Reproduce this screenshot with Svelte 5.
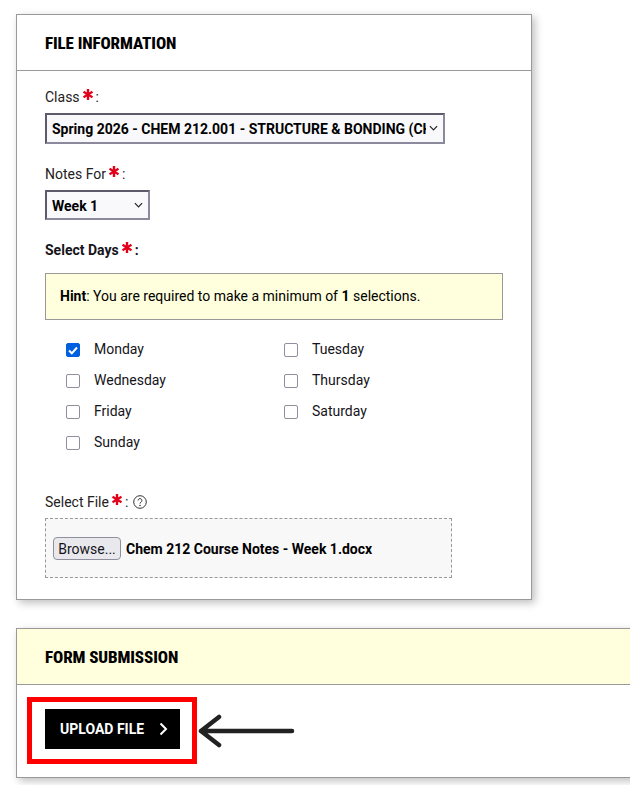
<script>
	const days = [
		{ name: 'Monday', checked: true },
		{ name: 'Tuesday', checked: false },
		{ name: 'Wednesday', checked: false },
		{ name: 'Thursday', checked: false },
		{ name: 'Friday', checked: false },
		{ name: 'Saturday', checked: false },
		{ name: 'Sunday', checked: false }
	];
</script>

{#snippet req()}
	<svg class="req" viewBox="0 0 10 11" width="10" height="11"><path d="M5 0v11M.5 2.700l9 5.600M.5 8.300l9-5.600" /></svg>
{/snippet}

<div class="page">
	<section class="card info">
		<h2 class="card-head">FILE INFORMATION</h2>
		<div class="card-body">
			<div class="label">Class{@render req()}:</div>
			<div class="select class-select">
				<select>
					<option>Spring 2026 - CHEM 212.001 - STRUCTURE &amp; BONDING (CHEM 212)</option>
				</select>
				<svg class="chev" viewBox="0 0 10 6" width="9" height="6"><path d="M1 1l4 4 4-4" /></svg>
			</div>

			<div class="label notes">Notes For{@render req()}:</div>
			<div class="select week-select">
				<select>
					<option>Week 1</option>
				</select>
				<svg class="chev" viewBox="0 0 10 6" width="9" height="6"><path d="M1 1l4 4 4-4" /></svg>
			</div>

			<div class="label days-label"><strong>Select Days</strong>{@render req()}<strong>:</strong></div>
			<div class="hint"><strong>Hint</strong>: You are required to make a minimum of <strong>1</strong> selections.</div>

			<div class="days">
				{#each days as day}
					<label class="day">
						<input type="checkbox" checked={day.checked} />
						<span>{day.name}</span>
					</label>
				{/each}
			</div>

			<div class="label file-label">
				Select File{@render req()}:
				<svg class="help" viewBox="0 0 14 14" width="14" height="14">
					<circle cx="7" cy="7" r="6.300" />
					<path d="M5.100 5.500a1.900 1.900 0 1 1 2.900 1.600c-.7.4-1 .8-1 1.500" />
					<circle class="dot" cx="7" cy="10.500" r=".8" />
				</svg>
			</div>
			<div class="dropzone">
				<button class="browse" type="button">Browse...</button>
				<strong>Chem 212 Course Notes - Week 1.docx</strong>
			</div>
		</div>
	</section>

	<section class="card submit">
		<h2 class="card-head yellow">FORM SUBMISSION</h2>
		<div class="submit-body">
			<button class="upload" type="button">
				UPLOAD FILE
				<svg viewBox="0 0 9 14" width="9" height="14"><path d="M1.500 1.500L7 7l-5.500 5.500" /></svg>
			</button>
			<div class="red-box"></div>
			<svg class="arrow" viewBox="0 0 98 34" width="98" height="34">
				<path d="M95 17H4M22 3L4 17l18 14" />
			</svg>
		</div>
	</section>
</div>

<style>
	:global(body) {
		margin: 0;
		background: #fff;
		overflow: hidden;
	}

	.page {
		width: 630px;
		height: 785px;
		overflow: hidden;
		padding: 14px 0 0 16px;
		box-sizing: border-box;
		font-family: Roboto, sans-serif;
		font-size: 14px;
		color: #15141a;
	}

	.card {
		background: #fff;
		border: 1px solid #999;
		box-sizing: border-box;
		box-shadow: 3px 3px 8px rgba(0, 0, 0, 0.25);
	}

	.info {
		width: 516px;
		height: 586px;
	}

	.card-head {
		margin: 0;
		height: 56px;
		box-sizing: border-box;
		padding-left: 28px;
		border-bottom: 1px solid #999;
		font-size: 17px;
		font-weight: 800;
		font-stretch: 85%;
		letter-spacing: -0.1px;
		line-height: 56px;
		color: #000;
	}

	.yellow {
		background: #ffffdd;
	}

	.card-body {
		padding: 15px 28px 0;
	}

	.label {
		height: 22px;
		line-height: 22px;
		white-space: nowrap;
		color: #222;
	}

	.req {
		margin: 0 3px 0 3px;
		vertical-align: 2px;
		fill: none;
		stroke: #e2001a;
		stroke-width: 2.4;
	}

	.select {
		position: relative;
		margin-top: 5px;
	}

	.select select {
		display: block;
		width: 100%;
		appearance: none;
		box-sizing: border-box;
		border: 2px solid #77768a;
		border-color: #5c5b6b #8a8a9c #8a8a9c #5c5b6b;
		border-radius: 0;
		background: #f9f9fb;
		font-family: Roboto, sans-serif;
		font-size: 14px;
		font-weight: 700;
		color: #000;
		padding: 0 17px 0 5px;
	}

	.class-select {
		width: 400px;
	}

	.class-select select {
		height: 31px;
	}

	.week-select {
		width: 105px;
	}

	.week-select select {
		height: 30px;
		padding-top: 2px;
	}

	.chev {
		position: absolute;
		right: 7px;
		top: 12px;
		fill: none;
		stroke: #222;
		stroke-width: 1.3;
	}

	.notes {
		margin-top: 19px;
	}

	.days-label {
		margin-top: 19px;
	}

	.days-label strong {
		color: #15141a;
	}

	.hint {
		margin-top: 12px;
		width: 458px;
		height: 47px;
		box-sizing: border-box;
		padding-left: 14px;
		line-height: 45px;
		background: #ffffdd;
		border: 1px solid #999;
		color: #000;
	}

	.days {
		display: grid;
		grid-template-columns: 218px 1fr;
		grid-auto-rows: 31px;
		margin: 14px 0 0 21px;
	}

	.day {
		display: flex;
		align-items: center;
		gap: 14px;
		height: 31px;
	}

	.day span {
		position: relative;
		top: -1px;
	}

	.day input {
		appearance: none;
		width: 14px;
		height: 14px;
		margin: 0;
		box-sizing: border-box;
		border: 1px solid #8f8f9d;
		border-radius: 2px;
		background: #fff;
	}

	.day input:checked {
		border-color: #0060df;
		background: #0060df url("data:image/svg+xml,%3Csvg xmlns='http://www.w3.org/2000/svg' viewBox='0 0 14 14'%3E%3Cpath d='M3 7.500l2.800 2.800L11 4.500' fill='none' stroke='white' stroke-width='2'/%3E%3C/svg%3E") center / 14px no-repeat;
	}

	.file-label {
		margin-top: 33px;
	}

	.help {
		margin-left: 1px;
		vertical-align: -2px;
		fill: none;
		stroke: #333;
		stroke-width: 1;
	}

	.help .dot {
		fill: #333;
		stroke: none;
	}

	.dropzone {
		display: flex;
		align-items: center;
		gap: 5px;
		margin-top: 5px;
		width: 407px;
		height: 60px;
		box-sizing: border-box;
		padding: 1px 0 0 7px;
		border: 1px dashed #999;
		background: #f8f8f8;
		color: #000;
	}

	.browse {
		width: 68px;
		height: 23px;
		padding: 0;
		border: 1px solid #8f8f9d;
		border-radius: 4px;
		background: #e9e9ed;
		font-family: Roboto, sans-serif;
		font-size: 14px;
		color: #15141a;
	}

	.submit {
		width: 640px;
		height: 150px;
		margin-top: 28px;
	}

	.submit-body {
		position: relative;
		padding: 24px 0 0 28px;
	}

	.upload {
		display: flex;
		align-items: center;
		justify-content: space-between;
		width: 135px;
		height: 40px;
		padding: 0 12px 0 15px;
		border: 0;
		background: #000;
		color: #fff;
		font-family: Roboto, sans-serif;
		font-size: 14px;
		font-weight: 700;
	}

	.upload svg {
		fill: none;
		stroke: #fff;
		stroke-width: 2;
	}

	.red-box {
		position: absolute;
		left: 10px;
		top: 12px;
		width: 170px;
		height: 67px;
		box-sizing: border-box;
		border: 5px solid #f00;
	}

	.arrow {
		position: absolute;
		left: 180px;
		top: 29px;
		fill: none;
		stroke: #222;
		stroke-width: 4.5;
		stroke-linecap: round;
		stroke-linejoin: round;
	}
</style>
